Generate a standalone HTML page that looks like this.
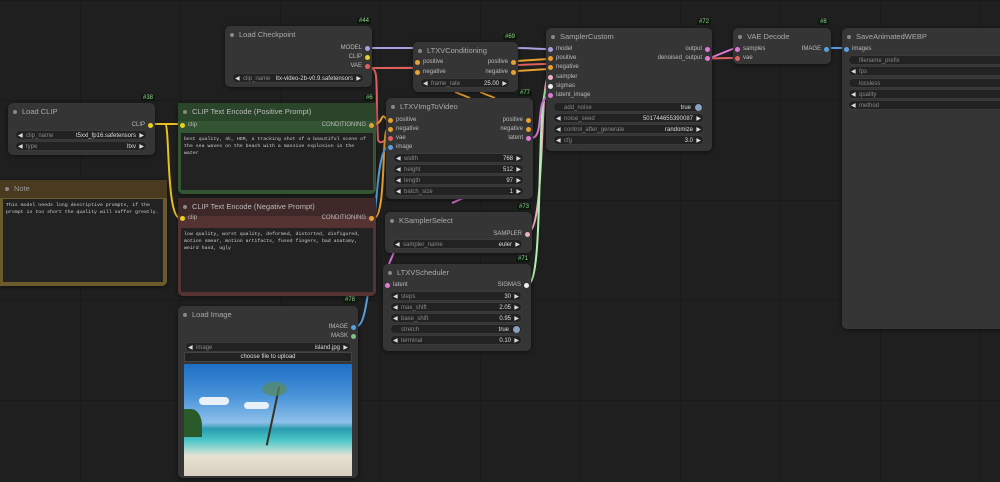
<!DOCTYPE html>
<html><head><meta charset="utf-8"><style>
*{margin:0;padding:0;box-sizing:border-box}
body{width:1000px;height:482px;overflow:hidden;background:#1f1f1f;font-family:"Liberation Sans",sans-serif;position:relative;
background-image:linear-gradient(#1a1a1a 1px,transparent 1px),linear-gradient(90deg,#1a1a1a 1px,transparent 1px);background-size:100px 100px;background-position:-20px 0}
.n{position:absolute;background:#353535;border-radius:5px;color:#ccc;font-size:6.5px;box-shadow:0 1px 4px rgba(0,0,0,.5)}
.t{height:18px;line-height:18px;padding-left:14px;font-size:7.5px;color:#aaa;position:relative}
.t:before{content:"";position:absolute;left:5px;top:7px;width:4px;height:4px;border-radius:50%;background:#888}
.id{position:absolute;background:#0b1a0b;color:#9c9;font-size:6px;padding:0 2px;border-radius:2px}
.r{position:absolute;font-size:6px;color:#bbb;white-space:nowrap}
.o{text-align:right}
.d{position:absolute;width:5px;height:5px;border-radius:50%}
.w{position:absolute;height:10px;background:#222;border-radius:5px;font-size:6px;color:#888;line-height:10px;padding:0 10px;border:1px solid #3a3a3a}
.w b{position:absolute;right:10px;color:#ddd;font-weight:normal}
.w:before{content:"◀";position:absolute;left:2px;color:#ddd;font-size:6px}
.w:after{content:"▶";position:absolute;right:2px;color:#ddd;font-size:6px}
.w.nt:before,.w.nt:after{content:""}
.ta{position:absolute;background:#222;font-family:"Liberation Mono",monospace;font-size:4.9px;color:#ccc;padding:3px 3px;line-height:7px}
</style></head><body>
<svg width="1000" height="482" style="position:absolute;left:0;top:0">
<g fill="none" stroke-width="2">
<path d="M369 48 L415 48" stroke="#a8a0e0"/>
<path d="M517 48 C530 48 535 49 548 49" stroke="#a8a0e0"/>
<path d="M369 68 C380 68 375 80 378 140 C380 145 385 140 387 140" stroke="#e06060"/>
<path d="M369 68 L415 68" stroke="#e06060"/>
<path d="M710 58 L735 48" stroke="#e07ad8"/>
<path d="M370 68 C500 68 600 60 735 58" stroke="#e06060"/>
<path d="M830 48 L845 48" stroke="#5aa0e0"/>
<path d="M155 124 L180 124" stroke="#e8c020"/>
<path d="M165 124 C170 124 166 218 180 218" stroke="#e8c020"/>
<path d="M374 124 C384 124 380 110 387 120" stroke="#e8a030"/>
<path d="M374 218 C386 218 382 130 387 130" stroke="#e8a030"/>
<path d="M517 61 L548 59" stroke="#e8a030"/>
<path d="M517 71 L548 69" stroke="#e8a030"/>
<path d="M452 203 L468 196" stroke="#d070d0"/>
<path d="M528 232 C545 232 540 80 548 78" stroke="#f0b0c0"/>
<path d="M528 284 C545 284 535 90 548 87" stroke="#b0f0b0"/>
<path d="M531 138 C545 138 535 100 548 97" stroke="#d070d0"/>
<path d="M357 326 C375 326 372 150 387 148" stroke="#5aa0e0"/>
<path d="M395 250 C390 262 385 270 386 284" stroke="#d070d0"/>
<path d="M455 92 L470 98 M480 92 L495 98" stroke="#e8a030"/>
</g></svg>

<div class="id" style="left:357px;top:18px">#44</div>
<div class="n" style="left:225px;top:26px;width:147px;height:61px"><div class="t">Load Checkpoint</div>
<div class="r o" style="right:10px;top:19px">MODEL</div><div class="d" style="right:2px;top:20px;background:#a8a0e0"></div>
<div class="r o" style="right:10px;top:28px">CLIP</div><div class="d" style="right:2px;top:29px;background:#e8d020"></div>
<div class="r o" style="right:10px;top:37px">VAE</div><div class="d" style="right:2px;top:38px;background:#e06060"></div>
<div class="w" style="left:7px;top:47px;width:132px">clip_name<b>ltx-video-2b-v0.9.safetensors</b></div></div>

<div class="id" style="left:141px;top:95px">#38</div>
<div class="n" style="left:8px;top:103px;width:147px;height:52px"><div class="t">Load CLIP</div>
<div class="r o" style="right:10px;top:19px">CLIP</div><div class="d" style="right:2px;top:20px;background:#e8d020"></div>
<div class="w" style="left:7px;top:27px;width:132px">clip_name<b>t5xxl_fp16.safetensors</b></div>
<div class="w" style="left:7px;top:38px;width:132px">type<b>ltxv</b></div></div>

<div class="n" style="left:0;top:180px;width:167px;height:106px;background:#6a5a2c;border-radius:0 5px 5px 0"><div class="t" style="background:#4a3a20;color:#999">Note</div>
<div class="ta" style="left:3px;top:19px;width:160px;height:83px">This model needs long descriptive prompts, if the prompt is too short the quality will suffer greatly.</div></div>

<div class="id" style="left:364px;top:95px">#6</div>
<div class="n" style="left:178px;top:103px;width:198px;height:91px;background:#335533"><div class="t" style="background:#2a452a;color:#bbb">CLIP Text Encode (Positive Prompt)</div>
<div class="d" style="left:2px;top:20px;background:#e8d020"></div><div class="r" style="left:10px;top:19px">clip</div>
<div class="r o" style="right:10px;top:19px">CONDITIONING</div><div class="d" style="right:2px;top:20px;background:#e8a030"></div>
<div class="ta" style="left:3px;top:30px;width:192px;height:57px">best quality, 4k, HDR, a tracking shot of a beautiful scene of the sea waves on the beach with a massive explosion in the water</div></div>

<div class="n" style="left:178px;top:198px;width:198px;height:98px;background:#553333"><div class="t" style="background:#3e2828;color:#bbb">CLIP Text Encode (Negative Prompt)</div>
<div class="d" style="left:2px;top:18px;background:#e8d020"></div><div class="r" style="left:10px;top:17px">clip</div>
<div class="r o" style="right:10px;top:17px">CONDITIONING</div><div class="d" style="right:2px;top:18px;background:#e8a030"></div>
<div class="ta" style="left:3px;top:30px;width:192px;height:64px">low quality, worst quality, deformed, distorted, disfigured, motion smear, motion artifacts, fused fingers, bad anatomy, weird hand, ugly</div></div>

<div class="id" style="left:343px;top:297px">#78</div>
<div class="n" style="left:178px;top:306px;width:180px;height:172px"><div class="t">Load Image</div>
<div class="r o" style="right:10px;top:18px">IMAGE</div><div class="d" style="right:2px;top:19px;background:#5aa0e0"></div>
<div class="r o" style="right:10px;top:27px">MASK</div><div class="d" style="right:2px;top:28px;background:#80c080"></div>
<div class="w" style="left:7px;top:36px;width:166px">image<b>island.jpg</b></div>
<div style="position:absolute;left:6px;top:46px;width:168px;height:10px;background:#222;border:1px solid #444;font-size:6px;color:#ddd;text-align:center;line-height:9px">choose file to upload</div>
<div style="position:absolute;left:6px;top:58px;width:168px;height:112px;background:linear-gradient(180deg,#1d6fc4 0%,#4c95da 30%,#8ec0ea 52%,#2a9bb0 58%,#4cc7c8 68%,#9fd8d0 76%,#e8e2d4 82%,#d8d0c0 100%)">
<div style="position:absolute;left:0;top:45px;width:18px;height:28px;background:#2a5a2a;border-radius:0 60% 0 0"></div>
<div style="position:absolute;left:15px;top:33px;width:30px;height:8px;background:#e8f0f8;border-radius:6px"></div>
<div style="position:absolute;left:60px;top:38px;width:25px;height:7px;background:#e8f0f8;border-radius:6px"></div>
<div style="position:absolute;left:88px;top:22px;width:2px;height:60px;background:#3a3020;transform:rotate(12deg)"></div>
<div style="position:absolute;left:78px;top:18px;width:25px;height:14px;background:#5a8a5a;border-radius:50%;opacity:.7"></div>
</div></div>

<div class="id" style="left:503px;top:34px">#69</div>
<div class="n" style="left:413px;top:42px;width:105px;height:50px"><div class="t">LTXVConditioning</div>
<div class="d" style="left:2px;top:18px;background:#e8a030"></div><div class="r" style="left:10px;top:17px">positive</div>
<div class="d" style="left:2px;top:28px;background:#e8a030"></div><div class="r" style="left:10px;top:27px">negative</div>
<div class="r o" style="right:10px;top:17px">positive</div><div class="d" style="right:2px;top:18px;background:#e8a030"></div>
<div class="r o" style="right:10px;top:27px">negative</div><div class="d" style="right:2px;top:28px;background:#e8a030"></div>
<div class="w" style="left:7px;top:36px;width:90px">frame_rate<b>25.00</b></div></div>

<div class="id" style="left:518px;top:90px">#77</div>
<div class="n" style="left:386px;top:98px;width:147px;height:101px"><div class="t">LTXVImgToVideo</div>
<div class="d" style="left:2px;top:20px;background:#e8a030"></div><div class="r" style="left:10px;top:19px">positive</div>
<div class="d" style="left:2px;top:29px;background:#e8a030"></div><div class="r" style="left:10px;top:28px">negative</div>
<div class="d" style="left:2px;top:38px;background:#e06060"></div><div class="r" style="left:10px;top:37px">vae</div>
<div class="d" style="left:2px;top:47px;background:#5aa0e0"></div><div class="r" style="left:10px;top:46px">image</div>
<div class="r o" style="right:10px;top:19px">positive</div><div class="d" style="right:2px;top:20px;background:#e8a030"></div>
<div class="r o" style="right:10px;top:28px">negative</div><div class="d" style="right:2px;top:29px;background:#e8a030"></div>
<div class="r o" style="right:10px;top:37px">latent</div><div class="d" style="right:2px;top:38px;background:#e07ad8"></div>
<div class="w" style="left:7px;top:55px;width:131px">width<b>768</b></div>
<div class="w" style="left:7px;top:66px;width:131px">height<b>512</b></div>
<div class="w" style="left:7px;top:77px;width:131px">length<b>97</b></div>
<div class="w" style="left:7px;top:88px;width:131px">batch_size<b>1</b></div></div>

<div class="id" style="left:517px;top:204px">#73</div>
<div class="n" style="left:385px;top:212px;width:147px;height:41px"><div class="t">KSamplerSelect</div>
<div class="r o" style="right:10px;top:19px">SAMPLER</div><div class="d" style="right:2px;top:20px;background:#f0b0c0"></div>
<div class="w" style="left:7px;top:27px;width:131px">sampler_name<b>euler</b></div></div>

<div class="id" style="left:516px;top:256px">#71</div>
<div class="n" style="left:383px;top:264px;width:148px;height:87px"><div class="t">LTXVScheduler</div>
<div class="d" style="left:2px;top:19px;background:#e07ad8"></div><div class="r" style="left:10px;top:18px">latent</div>
<div class="r o" style="right:10px;top:18px">SIGMAS</div><div class="d" style="right:2px;top:19px;background:#eee"></div>
<div class="w" style="left:7px;top:27px;width:132px">steps<b>30</b></div>
<div class="w" style="left:7px;top:38px;width:132px">max_shift<b>2.05</b></div>
<div class="w" style="left:7px;top:49px;width:132px">base_shift<b>0.95</b></div>
<div class="w nt" style="left:7px;top:60px;width:132px">stretch<b style="right:12px">true</b><span style="position:absolute;right:1px;top:1px;width:7px;height:7px;border-radius:50%;background:#8aa0c0"></span></div>
<div class="w" style="left:7px;top:71px;width:132px">terminal<b>0.10</b></div></div>

<div class="id" style="left:697px;top:19px">#72</div>
<div class="n" style="left:546px;top:28px;width:166px;height:123px"><div class="t">SamplerCustom</div>
<div class="d" style="left:2px;top:19px;background:#a8a0e0"></div><div class="r" style="left:10px;top:18px">model</div>
<div class="d" style="left:2px;top:28px;background:#e8a030"></div><div class="r" style="left:10px;top:27px">positive</div>
<div class="d" style="left:2px;top:37px;background:#e8a030"></div><div class="r" style="left:10px;top:36px">negative</div>
<div class="d" style="left:2px;top:47px;background:#f0b0c0"></div><div class="r" style="left:10px;top:46px">sampler</div>
<div class="d" style="left:2px;top:56px;background:#eee"></div><div class="r" style="left:10px;top:55px">sigmas</div>
<div class="d" style="left:2px;top:65px;background:#e07ad8"></div><div class="r" style="left:10px;top:64px">latent_image</div>
<div class="r o" style="right:10px;top:18px">output</div><div class="d" style="right:2px;top:19px;background:#e07ad8"></div>
<div class="r o" style="right:10px;top:27px">denoised_output</div><div class="d" style="right:2px;top:28px;background:#e07ad8"></div>
<div class="w nt" style="left:7px;top:74px;width:151px">add_noise<b style="right:12px">true</b><span style="position:absolute;right:1px;top:1px;width:7px;height:7px;border-radius:50%;background:#8aa0c0"></span></div>
<div class="w" style="left:7px;top:85px;width:151px">noise_seed<b>501744655390087</b></div>
<div class="w" style="left:7px;top:96px;width:151px">control_after_generate<b>randomize</b></div>
<div class="w" style="left:7px;top:107px;width:151px">cfg<b>3.0</b></div></div>

<div class="id" style="left:818px;top:19px">#8</div>
<div class="n" style="left:733px;top:28px;width:98px;height:36px"><div class="t">VAE Decode</div>
<div class="d" style="left:2px;top:19px;background:#e07ad8"></div><div class="r" style="left:10px;top:18px">samples</div>
<div class="d" style="left:2px;top:28px;background:#e06060"></div><div class="r" style="left:10px;top:27px">vae</div>
<div class="r o" style="right:10px;top:18px">IMAGE</div><div class="d" style="right:2px;top:19px;background:#5aa0e0"></div></div>

<div class="n" style="left:842px;top:28px;width:170px;height:301px"><div class="t">SaveAnimatedWEBP</div>
<div class="d" style="left:2px;top:19px;background:#5aa0e0"></div><div class="r" style="left:10px;top:18px">images</div>
<div class="w nt" style="left:6px;top:27px;width:170px">filename_prefix</div>
<div class="w" style="left:6px;top:38px;width:170px">fps</div>
<div class="w nt" style="left:6px;top:50px;width:170px">lossless</div>
<div class="w" style="left:6px;top:61px;width:170px">quality</div>
<div class="w" style="left:6px;top:72px;width:170px">method</div></div>
</body></html>
